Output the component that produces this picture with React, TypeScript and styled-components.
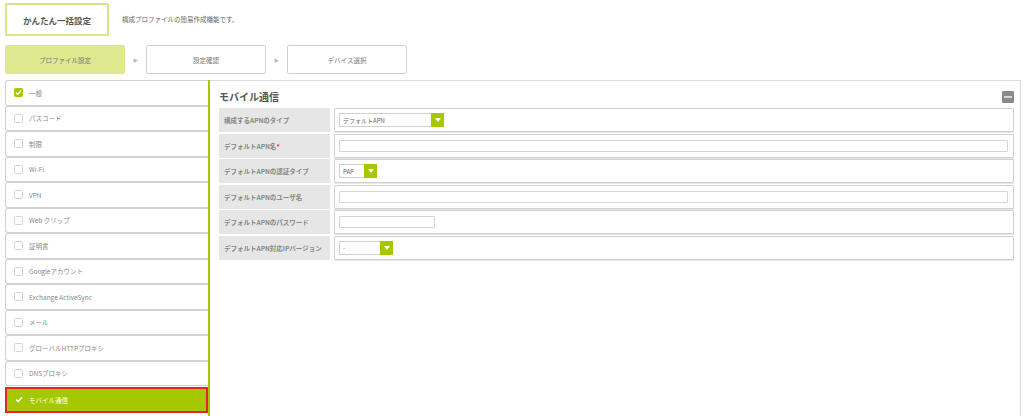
import styled, { createGlobalStyle } from "styled-components";

const GlobalStyle = createGlobalStyle`
  body {
    margin: 0;
    background: #fff;
    font-family: "Noto Sans CJK JP", "Noto Sans", sans-serif;
    color: #666;
  }
`;

const Page = styled.div`
  width: 1024px;
  height: 416px;
  overflow: hidden;
  padding: 3px 0 0 5px;
  box-sizing: border-box;
`;

const Header = styled.div`
  display: flex;
  align-items: center;
  gap: 13px;
`;

const TitleBox = styled.div`
  width: 104px;
  height: 33px;
  box-sizing: border-box;
  border: 2px solid #d8e68e;
  display: flex;
  align-items: center;
  justify-content: center;
  font-size: 8.5px;
  font-weight: bold;
  color: #555;
`;

const Desc = styled.div`
  font-size: 6.5px;
  color: #666;
  margin-top: -1px;
`;

const Steps = styled.div`
  display: flex;
  align-items: center;
  margin-top: 9px;
  height: 29px;
`;

const Step = styled.div<{ $active?: boolean }>`
  width: 120px;
  height: 29px;
  box-sizing: border-box;
  border: 1px solid ${({ $active }) => ($active ? "#dde88f" : "#cfcfcf")};
  background: ${({ $active }) => ($active ? "#dde88f" : "#fff")};
  border-radius: 2px;
  display: flex;
  align-items: center;
  justify-content: center;
  font-size: 6.5px;
  color: #777;
`;

const Arrow = styled.div`
  width: 21px;
  text-align: center;
  font-size: 5px;
  color: #bbb;
`;

const Body = styled.div`
  display: flex;
  margin-top: 6px;
  height: 340px;
`;

const Sidebar = styled.div`
  width: 203px;
  border-right: 2px solid #a5c800;
  display: flex;
  flex-direction: column;
`;

const NavItem = styled.div<{ $active?: boolean }>`
  height: 25.5px;
  flex-shrink: 0;
  box-sizing: border-box;
  display: flex;
  align-items: center;
  gap: 6px;
  padding-left: 8px;
  border: ${({ $active }) => ($active ? "2px solid #e8232c" : "1px solid #d2d2d2")};
  border-right: ${({ $active }) => ($active ? "2px solid #e8232c" : "none")};
  border-radius: ${({ $active }) => ($active ? "0" : "3px 0 0 3px")};
  background: ${({ $active }) => ($active ? "#a6c800" : "#fff")};
  color: ${({ $active }) => ($active ? "#fff" : "#888")};
  font-size: 6.5px;
  margin-top: ${({ $active }) => ($active ? "1px" : "0")};
`;

const CheckBox = styled.span<{ $checked?: boolean }>`
  width: 9px;
  height: 9px;
  box-sizing: border-box;
  border-radius: 1.5px;
  border: 1px solid ${({ $checked }) => ($checked ? "#a6c800" : "#d4d4d4")};
  background: ${({ $checked }) => ($checked ? "#a6c800" : "#fff")};
  display: flex;
  align-items: center;
  justify-content: center;
`;

const Main = styled.div`
  flex: 1;
  border-top: 1px solid #dcdcdc;
  border-right: 1px solid #dcdcdc;
  margin-right: 3px;
  padding: 7px 6px 0 9px;
`;

const TitleRow = styled.div`
  display: flex;
  align-items: center;
  justify-content: space-between;
  height: 17px;
  margin-bottom: 3px;
`;

const SectionTitle = styled.h2`
  margin: 0;
  font-size: 10px;
  font-weight: bold;
  color: #555;
`;

const Collapse = styled.div`
  width: 12px;
  height: 12px;
  background: #8a8a8a;
  border-radius: 1px;
  display: flex;
  align-items: center;
  justify-content: center;
  &::after {
    content: "";
    width: 8px;
    height: 2px;
    background: #d8d8d8;
  }
`;

const FormRow = styled.div`
  display: grid;
  grid-template-columns: 111px 1fr;
  gap: 4px;
  height: 24px;
  margin-bottom: 1.5px;
`;

const Label = styled.div`
  background: #e6e6e6;
  display: flex;
  align-items: center;
  padding-left: 5px;
  font-size: 6.5px;
  font-weight: bold;
  color: #888;
  white-space: nowrap;
`;

const Required = styled.span`
  color: #e8232c;
`;

const Value = styled.div`
  border: 1px solid #d0d0d0;
  border-radius: 1px;
  box-shadow: 0 1px 0 #e8e8e8;
  display: flex;
  align-items: center;
  padding: 0 5px 0 4px;
`;

const TextField = styled.div<{ $width?: string }>`
  width: ${({ $width }) => $width ?? "100%"};
  height: 12px;
  box-sizing: border-box;
  border: 1px solid #d4d4d4;
  border-radius: 1px;
  background: #fff;
`;

const Select = styled.div<{ $width: number }>`
  width: ${({ $width }) => $width}px;
  height: 14px;
  box-sizing: border-box;
  border: 1px solid #d0d0d0;
  display: flex;
  align-items: center;
  justify-content: space-between;
  font-size: 6px;
  color: #666;
  padding-left: 3px;
`;

const DropBtn = styled.span`
  width: 13px;
  height: 14px;
  margin-right: -1px;
  background: #a6c800;
  display: flex;
  align-items: center;
  justify-content: center;
  &::after {
    content: "";
    border-left: 3px solid transparent;
    border-right: 3px solid transparent;
    border-top: 4px solid #fff;
  }
`;

const Tick = ({ color }: { color: string }) => (
  <svg width="8" height="7" viewBox="0 0 8 7">
    <path d="M1 3.6 L3.1 5.6 L7 1.2" stroke={color} strokeWidth="1.4" fill="none" />
  </svg>
);

const navItems = [
  "一般",
  "パスコード",
  "制限",
  "Wi-Fi",
  "VPN",
  "Web クリップ",
  "証明書",
  "Googleアカウント",
  "Exchange ActiveSync",
  "メール",
  "グローバルHTTPプロキシ",
  "DNSプロキシ",
  "モバイル通信",
];

export default function App() {
  return (
    <Page>
      <GlobalStyle />
      <Header>
        <TitleBox>かんたん一括設定</TitleBox>
        <Desc>構成プロファイルの簡易作成機能です。</Desc>
      </Header>

      <Steps>
        <Step $active>プロファイル設定</Step>
        <Arrow>▶</Arrow>
        <Step>設定確認</Step>
        <Arrow>▶</Arrow>
        <Step>デバイス選択</Step>
      </Steps>

      <Body>
        <Sidebar>
          {navItems.map((name, i) => {
            const active = i === navItems.length - 1;
            if (active) {
              return (
                <NavItem key={name} $active>
                  <Tick color="#fff" />
                  {name}
                </NavItem>
              );
            }
            return (
              <NavItem key={name}>
                <CheckBox $checked={i === 0}>{i === 0 && <Tick color="#fff" />}</CheckBox>
                {name}
              </NavItem>
            );
          })}
        </Sidebar>

        <Main>
          <TitleRow>
            <SectionTitle>モバイル通信</SectionTitle>
            <Collapse />
          </TitleRow>

          <FormRow>
            <Label>構成するAPNのタイプ</Label>
            <Value>
              <Select $width={105}>
                デフォルトAPN
                <DropBtn />
              </Select>
            </Value>
          </FormRow>
          <FormRow>
            <Label>
              デフォルトAPN名<Required>*</Required>
            </Label>
            <Value>
              <TextField />
            </Value>
          </FormRow>
          <FormRow>
            <Label>デフォルトAPNの認証タイプ</Label>
            <Value>
              <Select $width={38}>
                PAP
                <DropBtn />
              </Select>
            </Value>
          </FormRow>
          <FormRow>
            <Label>デフォルトAPNのユーザ名</Label>
            <Value>
              <TextField />
            </Value>
          </FormRow>
          <FormRow>
            <Label>デフォルトAPNのパスワード</Label>
            <Value>
              <TextField $width="96px" />
            </Value>
          </FormRow>
          <FormRow>
            <Label>デフォルトAPN対応IPバージョン</Label>
            <Value>
              <Select $width={54}>
                -
                <DropBtn />
              </Select>
            </Value>
          </FormRow>
        </Main>
      </Body>
    </Page>
  );
}
